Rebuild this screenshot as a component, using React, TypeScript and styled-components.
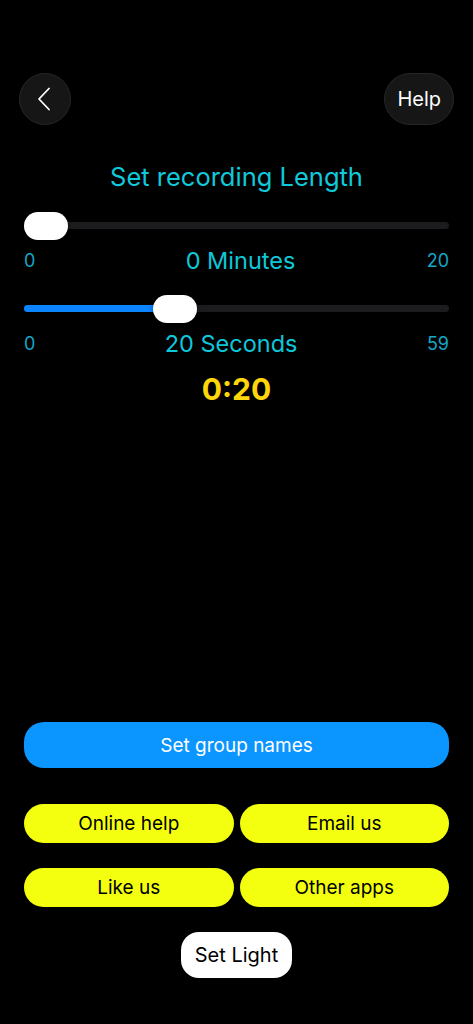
import React, { FC } from 'react';
import styled, { createGlobalStyle } from 'styled-components';

const GlobalStyle = createGlobalStyle`
  html, body {
    margin: 0;
    padding: 0;
    background: #000;
  }
  body {
    font-family: Inter, "Noto Sans", "Liberation Sans", sans-serif;
  }
`;

const Screen = styled.div`
  width: 473px;
  min-height: 1024px;
  box-sizing: border-box;
  display: flex;
  flex-direction: column;
  background: #000;
  padding: 73px 0 46px;
`;

const TopBar = styled.div`
  display: flex;
  justify-content: space-between;
  align-items: center;
  padding: 0 19px;
`;

const RoundButton = styled.button`
  height: 52px;
  min-width: 52px;
  padding: 0 12px;
  border-radius: 26px;
  border: 1px solid #262626;
  background: #161616;
  color: #fff;
  font-family: inherit;
  font-size: 20px;
  display: flex;
  align-items: center;
  justify-content: center;
  box-sizing: border-box;
`;

const BackButton = styled(RoundButton)`
  width: 52px;
  padding: 0 2px 0 0;
`;

const Title = styled.div`
  margin-top: 36px;
  text-align: center;
  color: #10c9da;
  font-size: 25.5px;
  line-height: 32px;
`;

const SliderBlock = styled.div<{ $top: number }>`
  margin-top: ${(p) => p.$top}px;
  padding: 0 24px;
`;

const Track = styled.div`
  position: relative;
  height: 7px;
  border-radius: 4px;
  background: #1c1c1e;
`;

const Fill = styled.div`
  height: 100%;
  border-radius: 4px;
  background: #0a84ff;
`;

const Thumb = styled.div`
  position: absolute;
  top: 50%;
  width: 44px;
  height: 28px;
  margin-top: -14px;
  border-radius: 14px;
  background: #fff;
  box-shadow: 0 1px 4px rgba(0, 0, 0, 0.4);
`;

const Labels = styled.div`
  margin-top: 17px;
  display: flex;
  justify-content: space-between;
  align-items: center;
  height: 28px;
`;

const EndLabel = styled.span`
  color: #17a6c6;
  font-size: 18px;
`;

const ValueLabel = styled.span<{ $nudge: number }>`
  margin-left: ${(p) => p.$nudge}px;
  color: #0ec8da;
  font-size: 23.5px;
`;

const Total = styled.div`
  margin-top: 12px;
  text-align: center;
  color: #ffd60a;
  font-size: 30px;
  font-weight: 700;
  line-height: 40px;
`;

const Spacer = styled.div`
  flex: 1;
`;

const Actions = styled.div`
  padding: 0 24px;
  display: flex;
  flex-direction: column;
`;

const WideButton = styled.button`
  height: 46px;
  border: none;
  border-radius: 20px;
  background: #0a95ff;
  color: #fff;
  font-family: inherit;
  font-size: 19px;
`;

const Grid = styled.div`
  margin-top: 36px;
  display: grid;
  grid-template-columns: 1fr 1fr;
  column-gap: 6px;
  row-gap: 25px;
`;

const PillButton = styled.button`
  height: 39px;
  border: none;
  border-radius: 20px;
  background: #f4ff0f;
  color: #000;
  font-family: inherit;
  font-size: 19px;
`;

const LightButton = styled.button`
  margin: 25px auto 0;
  height: 46px;
  padding: 0 14px;
  border: none;
  border-radius: 18px;
  background: #fff;
  color: #000;
  font-family: inherit;
  font-size: 20px;
`;

interface ISlider {
  top: number;
  value: number;
  max: number;
  label: string;
  nudge?: number;
}

const TRACK_WIDTH = 425;
const THUMB_WIDTH = 44;

const Slider: FC<ISlider> = ({ top, value, max, label, nudge = 0 }: ISlider) => {
  const left = (value / max) * (TRACK_WIDTH - THUMB_WIDTH);
  return (
    <SliderBlock $top={top}>
      <Track>
        <Fill style={{ width: value ? left + THUMB_WIDTH / 2 : 0 }} />
        <Thumb style={{ left }} />
      </Track>
      <Labels>
        <EndLabel>0</EndLabel>
        <ValueLabel $nudge={nudge}>{label}</ValueLabel>
        <EndLabel>{max}</EndLabel>
      </Labels>
    </SliderBlock>
  );
};

const App: FC = () => {
  const minutes = 0;
  const seconds = 20;

  return (
    <Screen>
      <GlobalStyle />
      <TopBar>
        <BackButton>
          <svg width="14" height="24" viewBox="0 0 14 24" fill="none">
            <path d="M12 1.5 L2 12 L12 22.5" stroke="#fff" strokeWidth="1.8" strokeLinecap="round" strokeLinejoin="round" />
          </svg>
        </BackButton>
        <RoundButton>Help</RoundButton>
      </TopBar>

      <Title>Set recording Length</Title>

      <Slider top={29} value={minutes} max={20} label={`${minutes} Minutes`} nudge={19} />
      <Slider top={31} value={seconds} max={59} label={`${seconds} Seconds`} />

      <Total>
        {minutes}:{String(seconds).padStart(2, '0')}
      </Total>

      <Spacer />

      <Actions>
        <WideButton>Set group names</WideButton>
        <Grid>
          <PillButton>Online help</PillButton>
          <PillButton>Email us</PillButton>
          <PillButton>Like us</PillButton>
          <PillButton>Other apps</PillButton>
        </Grid>
        <LightButton>Set Light</LightButton>
      </Actions>
    </Screen>
  );
};

export default App;
